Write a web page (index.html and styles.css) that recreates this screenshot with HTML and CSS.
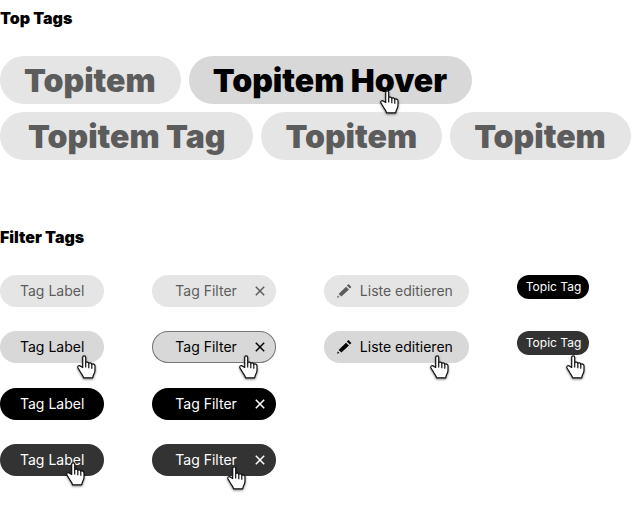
FILE: index.html
```html
<!DOCTYPE html>
<html lang="de">
<head>
<meta charset="utf-8">
<title>Tags</title>
<link rel="stylesheet" href="styles.css">
</head>
<body>
<svg class="defs" aria-hidden="true">
  <symbol id="hand" viewBox="0 0 20 25">
    <path d="M5.700 12.500V2.400C5.700.3 8.700.3 8.700 2.400V7.800C9.200 6.600 11.500 6.800 11.800 8.300C12.400 7.500 14.400 7.800 14.800 9.300C15.800 8.600 18 9 18 11V15.500C18 18.200 16 19.600 15.700 22.800H6.500C6.300 21 5 19.300 3.700 17.500L1 13C.2 11.200 2 9.700 3.600 11.200Z" fill="#fff" stroke="#111" stroke-width="1.200" stroke-linejoin="round"/>
    <path d="M8.700 7.500v5M11.800 8.300v5M14.800 9.300v4.500" fill="none" stroke="#111" stroke-width="1.200"/>
  </symbol>
  <symbol id="cross" viewBox="0 0 10 10">
    <path d="M.8.8l8.400 8.400M9.200.8L.8 9.200" fill="none" stroke="currentColor" stroke-width="1.500"/>
  </symbol>
  <symbol id="pencil" viewBox="0 0 16 16">
    <path d="M1 14.800l.8-2.400 1.700 1.600zM2.600 10.900L10 3.700l3 2.700-7.600 7.200zM10.800 2.600l1.700-1.600 2.900 2.900-1.500 1.500z" fill="currentColor"/>
  </symbol>
</svg>
<main>
  <section class="group">
    <h2>Top Tags</h2>
    <div class="top-tags">
      <button class="tag top">Topitem</button>
      <button class="tag top hover">Topitem Hover<svg class="cursor at-top"><use href="#hand"/></svg></button>
      <button class="tag top wide">Topitem Tag</button>
      <button class="tag top">Topitem</button>
      <button class="tag top">Topitem</button>
    </div>
  </section>
  <section class="group">
    <h2>Filter Tags</h2>
    <div class="filter-tags">
      <div class="stack">
        <button class="tag label">Tag Label</button>
        <button class="tag label hover">Tag Label<svg class="cursor at-label"><use href="#hand"/></svg></button>
        <button class="tag label active">Tag Label</button>
        <button class="tag label active-hover">Tag Label<svg class="cursor at-label-active"><use href="#hand"/></svg></button>
      </div>
      <div class="stack">
        <button class="tag filter">Tag Filter<svg class="cross"><use href="#cross"/></svg></button>
        <button class="tag filter hover outlined">Tag Filter<svg class="cross"><use href="#cross"/></svg><svg class="cursor at-filter"><use href="#hand"/></svg></button>
        <button class="tag filter active">Tag Filter<svg class="cross"><use href="#cross"/></svg></button>
        <button class="tag filter active-hover">Tag Filter<svg class="cross"><use href="#cross"/></svg><svg class="cursor at-filter-active"><use href="#hand"/></svg></button>
      </div>
      <div class="stack">
        <button class="tag edit"><svg class="pencil"><use href="#pencil"/></svg>Liste editieren</button>
        <button class="tag edit hover"><svg class="pencil"><use href="#pencil"/></svg>Liste editieren<svg class="cursor at-edit"><use href="#hand"/></svg></button>
      </div>
      <div class="stack topics">
        <button class="tag topic active">Topic Tag</button>
        <button class="tag topic active-hover">Topic Tag<svg class="cursor at-topic"><use href="#hand"/></svg></button>
      </div>
    </div>
  </section>
</main>
</body>
</html>
```
FILE: styles.css
```css
* { box-sizing: border-box; }

body {
  margin: 0;
  background: #fff;
  color: #000;
  font-family: Inter, "Liberation Sans", sans-serif;
}

.defs { position: absolute; width: 0; height: 0; }

main {
  display: flex;
  flex-direction: column;
  gap: 67px;
  padding: 8px 0 32px;
}

h2 {
  margin: 0 0 28px;
  font-size: 16px;
  line-height: 20px;
  font-weight: 900;
}

.top-tags { display: flex; flex-wrap: wrap; gap: 8px; }

.filter-tags { display: flex; align-items: flex-start; gap: 48px; }

.stack {
  display: flex;
  flex-direction: column;
  align-items: flex-start;
  gap: 24px;
}

.topics { gap: 32px; }

.tag {
  position: relative;
  display: flex;
  align-items: center;
  height: 32px;
  padding: 0 20px;
  border: 0;
  border-radius: 24px;
  background: #e5e5e5;
  color: #5c5c5c;
  font: 400 14px/20px Inter, "Liberation Sans", sans-serif;
  white-space: nowrap;
}

.top {
  height: 48px;
  padding: 2px 25px 0 24px;
  font-size: 32px;
  line-height: 40px;
  font-weight: 900;
}

.wide { padding: 2px 28px 0; }

.filter { gap: 18px; padding: 0 11px 0 23px; }

.edit { gap: 8px; padding: 0 16px 0 12px; }

.topic {
  height: 24px;
  padding: 0 8px 0 9px;
  font-size: 12px;
}

.hover { background: #d8d8d8; color: #000; }
.outlined { box-shadow: inset 0 0 0 1px #777; }
.active { background: #000; color: #fff; }
.active-hover { background: #333; color: #fff; }

.label.active,
.filter.active { margin-top: 1px; }

.cross { width: 10px; height: 10px; }
.pencil { width: 16px; height: 16px; }

.cursor {
  position: absolute;
  z-index: 1;
  width: 20px;
  height: 25px;
  filter: drop-shadow(0 1px 1px rgb(0 0 0 / 50%));
}

.at-top { left: 191px; top: 34px; }
.at-label { left: 77px; top: 24px; }
.at-label-active { left: 66px; top: 18px; }
.at-filter { left: 87px; top: 24px; }
.at-filter-active { left: 75px; top: 22px; }
.at-edit { left: 106px; top: 24px; }
.at-topic { left: 49px; top: 24px; }
```
